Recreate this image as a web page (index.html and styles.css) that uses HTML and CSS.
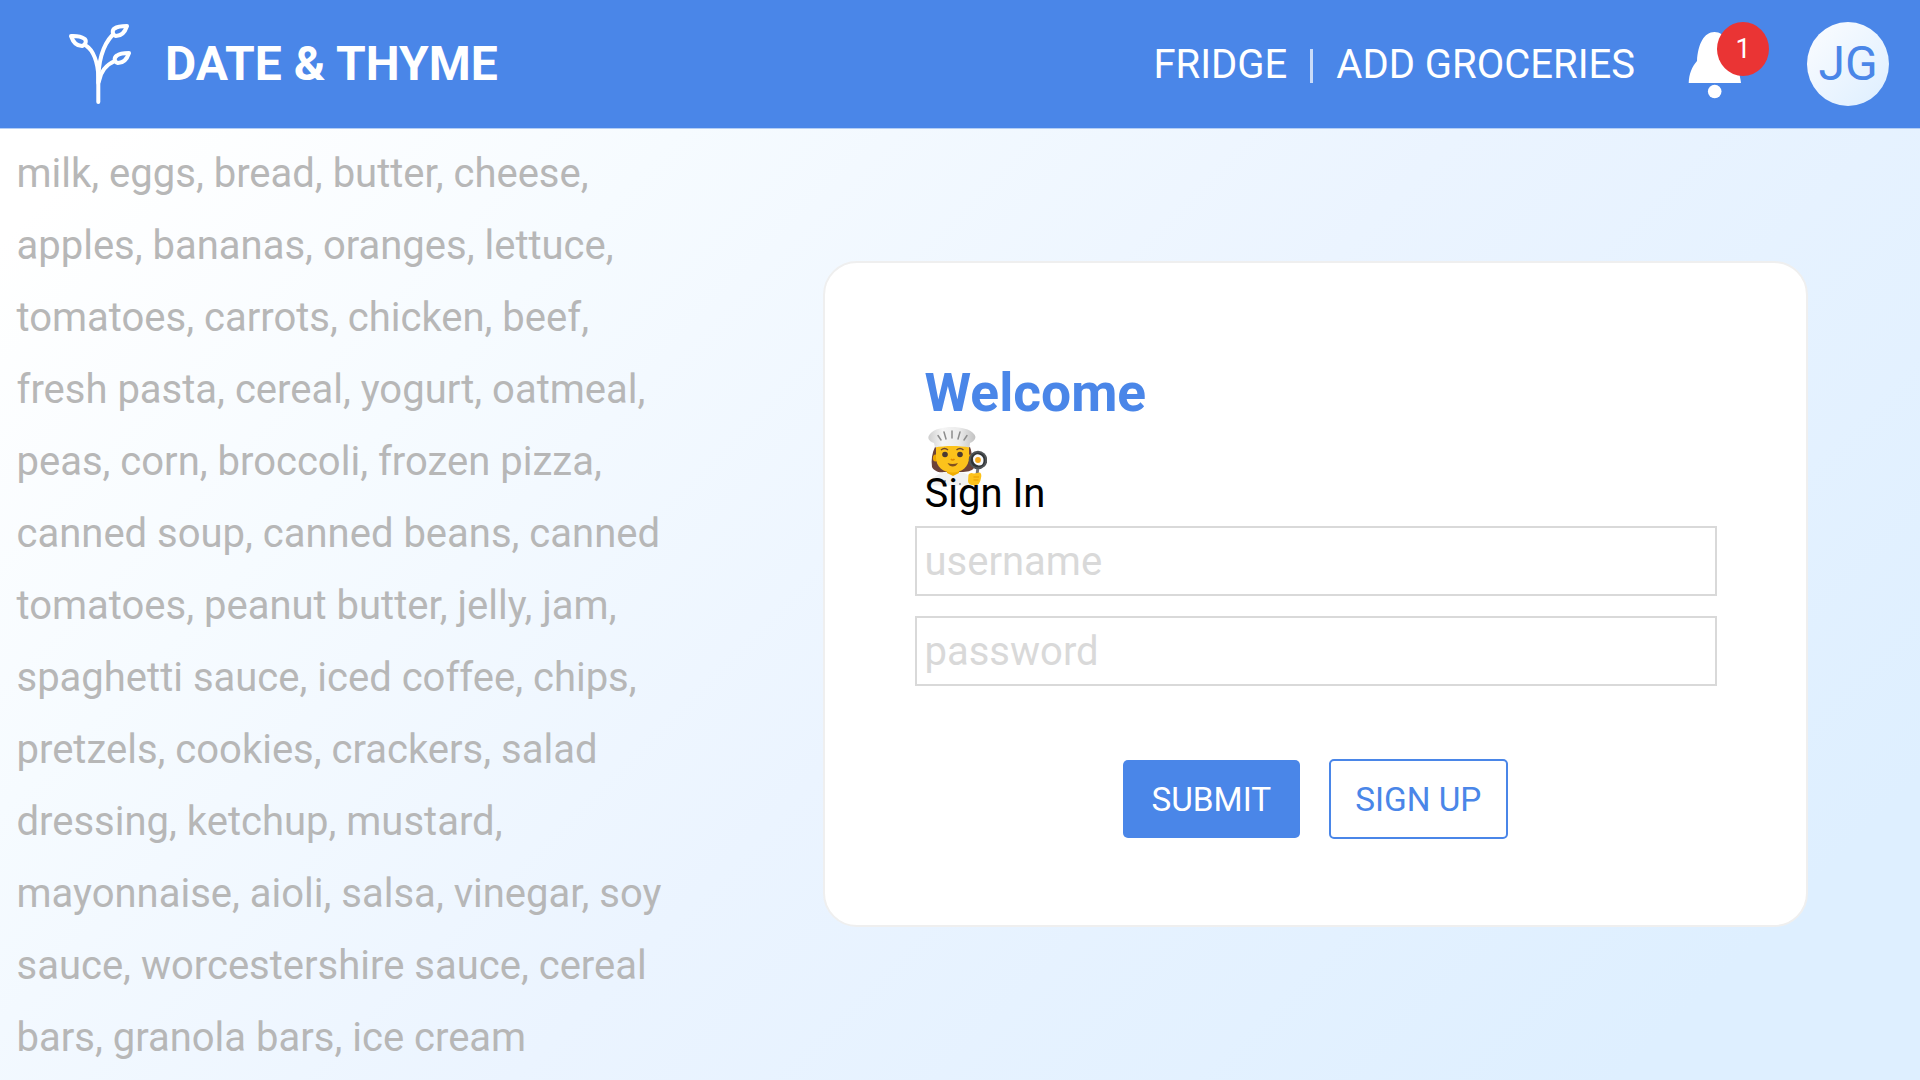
FILE: index.html
```html
<!DOCTYPE html>
<html lang="en">
<head>
<meta charset="utf-8">
<title>Date &amp; Thyme</title>
<link rel="stylesheet" href="styles.css">
</head>
<body>
<header class="topbar">
  <svg class="logo" viewBox="0 0 80 100" width="80" height="100" fill="none" stroke="#fff" stroke-width="4" stroke-linecap="round" stroke-linejoin="round">
    <path d="M38.300 87V62C38 47 33 35 26.500 31"/>
    <path d="M38.300 68C38 44 43 30 52.500 20"/>
    <path d="M39 66C41 56 46.500 49.500 55 46"/>
    <path d="M11 21C13 27 17 31 22 31C26 30 27 25 24 23.500C20 20.500 15 21 11 21Z"/>
    <path d="M67 11C65 17 61 21 56 21C52 20 52 15 54.500 13.500C58 11 63 11 67 11Z"/>
    <path d="M69 38C67 44 63 48 58 48C54 47 53.500 43 57 40.500C60 38 65 38 69 38Z"/>
  </svg>
  <h1 class="brand">DATE &amp; THYME</h1>
  <nav class="nav">
    <a class="nav-link">FRIDGE</a>
    <span class="divider"></span>
    <a class="nav-link">ADD GROCERIES</a>
  </nav>
  <div class="alerts">
    <svg class="bell" viewBox="0 0 54 68" width="54" height="68" fill="#fff">
      <path d="M.7 51C1 42 4 34.500 9 29C10 12 16 0 26.500 0S43 12 44 29C49 34.500 52 42 53 51Z"/>
      <ellipse cx="26.700" cy="59.500" rx="6.800" ry="6.700"/>
    </svg>
    <span class="badge">1</span>
  </div>
  <div class="avatar">JG</div>
</header>
<main class="page">
  <p class="groceries">milk, eggs, bread, butter, cheese,<br>apples, bananas, oranges, lettuce,<br>tomatoes, carrots, chicken, beef,<br>fresh pasta, cereal, yogurt, oatmeal,<br>peas, corn, broccoli, frozen pizza,<br>canned soup, canned beans, canned<br>tomatoes, peanut butter, jelly, jam,<br>spaghetti sauce, iced coffee, chips,<br>pretzels, cookies, crackers, salad<br>dressing, ketchup, mustard,<br>mayonnaise, aioli, salsa, vinegar, soy<br>sauce, worcestershire sauce, cereal<br>bars, granola bars, ice cream</p>
  <form class="card">
    <h2 class="welcome">Welcome</h2>
    <svg class="cook" viewBox="0 0 60 60" width="60" height="60">
      <defs>
        <linearGradient id="hat" x1="0" x2="1"><stop offset="0" stop-color="#cfcfcf"/><stop offset=".3" stop-color="#f5f5f5"/><stop offset=".65" stop-color="#ececec"/><stop offset="1" stop-color="#c2c2c2"/></linearGradient>
      </defs>
      <path d="M8 20C5 26 4 33 5 40C7 44 12 46 17 45H34C40 45 45 44 47 41C44 36 46 27 43 20Z" fill="#6d4339"/>
      <path d="M2 58.500C4 50 11 46.500 19 45H33C41 46.500 47 50 49 58.500Z" fill="#f1f1f1"/>
      <path d="M20 42H32V46L26 49L20 46Z" fill="#f0ad00"/>
      <ellipse cx="8.500" cy="31" rx="2.600" ry="3.500" fill="#eda600"/>
      <ellipse cx="43" cy="31" rx="2.600" ry="3.500" fill="#eda600"/>
      <path d="M9 19H42V30C42 40 35 45.500 25.500 45.500S9 40 9 30Z" fill="#fcc21b"/>
      <path d="M8 20.500L7 16C1 14 0 10 3 7C7 2 16 0 25 0S43 2 47 7C50 10 48 14 43 16L42.500 20.500C33 18.500 17 18.500 8 20.500Z" fill="url(#hat)"/>
      <path d="M14 13L11 8.500M19 12L17 5M25 11V4M31 12L33 5M37 13L40 8.500" stroke="#8c8c8c" stroke-width="1.500" stroke-linecap="round" fill="none"/>
      <path d="M14 23Q17.500 20 21 23M29.500 23Q33 20 36.500 23" stroke="#70492d" stroke-width="1.400" fill="none"/>
      <circle cx="18" cy="27.500" r="2.800" fill="#4a3a32"/><circle cx="33" cy="27.500" r="2.800" fill="#4a3a32"/>
      <path d="M24 32Q25.500 34 27.500 32" stroke="#e08a00" stroke-width="1.700" fill="none"/>
      <path d="M20.500 36Q25.500 38 31 36Q29 39.500 25.700 39.500Q22.500 39.500 20.500 36Z" fill="#805020"/>
      <path d="M51 40L50 48" stroke="#777" stroke-width="3"/>
      <circle cx="51" cy="33" r="9.300" fill="#505457"/><circle cx="51" cy="33" r="7.300" fill="#2f3336"/>
      <path d="M46 31Q48 26.500 52 27.500Q57 29 56.500 34Q56 39 51.500 38.500Q45.500 37 46 31Z" fill="#fafafa"/>
      <circle cx="51" cy="33" r="2.900" fill="#f4a91c"/>
      <path d="M41.500 47.500Q43 45 47 46.500L53 45.500Q55 47 54 51Q53 58.500 47.500 58.500Q41 58 41 54Z" fill="#fcc21b"/>
      <path d="M46.500 50H52M46.500 53H51.500" stroke="#e69b00" stroke-width="1"/>
      <circle cx="18" cy="54" r="1" fill="#888"/><circle cx="33" cy="57" r="1" fill="#888"/>
    </svg>
    <h3 class="signin">Sign In</h3>
    <input class="field" type="text" placeholder="username">
    <input class="field" type="text" placeholder="password">
    <div class="actions">
      <button class="btn btn-primary" type="button">SUBMIT</button>
      <button class="btn btn-outline" type="button">SIGN UP</button>
    </div>
  </form>
</main>
</body>
</html>
```

FILE: styles.css
```css
* { box-sizing: border-box; }
body {
  margin: 0;
  width: 1920px;
  height: 1080px;
  overflow: hidden;
  font-family: Roboto, sans-serif;
  background: linear-gradient(135deg, #ffffff 8%, #f6fbff 27%, #ebf4ff 53%, #deefff 90%);
}
.topbar {
  display: flex;
  align-items: flex-start;
  height: 128px;
  padding-left: 60px;
  background: #4a86e8;
  box-shadow: 0 1px 0 #b3cef6;
  color: #fff;
}
.logo { margin-top: 15px; }
.brand {
  margin: 0 0 0 25px;
  font-size: 48px;
  font-weight: 700;
  line-height: 128px;
}
.nav {
  display: flex;
  align-items: center;
  height: 128px;
  margin-left: auto;
}
.nav-link { font-size: 40px; }
.divider {
  width: 3px;
  height: 34px;
  margin: 4px 23px 0 23px;
  background: #c9dbf8;
}
.alerts {
  position: relative;
  margin: 32px 66px 0 53px;
  width: 54px;
}
.bell { display: block; }
.badge {
  position: absolute;
  left: 29px;
  top: -10px;
  width: 52px;
  height: 54px;
  border-radius: 50%;
  background: #ea3434;
  font-size: 27px;
  line-height: 54px;
  text-align: center;
}
.avatar {
  width: 82px;
  height: 84px;
  margin: 22px 31px 0 -1px;
  border-radius: 50%;
  background: linear-gradient(135deg, #fcfdff, #ddeeff);
  color: #4a86e8;
  font-size: 48px;
  line-height: 84px;
  text-align: center;
}
.page {
  display: flex;
  align-items: flex-start;
  height: 952px;
}
.groceries {
  width: 807px;
  margin: 10px 0 0;
  padding-left: 16.5px;
  color: #b7b7b7;
  font-size: 40px;
  line-height: 72px;
  white-space: nowrap;
}
.card {
  display: flex;
  flex-direction: column;
  width: 985px;
  height: 666px;
  margin: 133px 0 0 16px;
  padding: 95px 90px 0 89.5px;
  border: 2px solid #efefef;
  border-radius: 34px;
  background: #fff;
}
.welcome {
  margin: 0 0 0 10px;
  color: #4a86e8;
  font-size: 53.33px;
  font-weight: 700;
  line-height: 70px;
}
.cook { margin: -1px 0 0 12px; }
.signin {
  position: relative;
  margin: -18px 0 7px 10px;
  color: #000;
  font-size: 40px;
  font-weight: 400;
  line-height: 50px;
}
.field {
  width: 802px;
  height: 70px;
  margin: 0 0 20px;
  padding: 0 8px;
  border: 2px solid #d9d9d9;
  background: #fff;
  color: #333;
  font: 40px Roboto, sans-serif;
}
.field::placeholder { color: #d9d9d9; opacity: 1; }
.actions {
  display: flex;
  justify-content: center;
  align-items: center;
  gap: 29px;
  margin-top: 53px;
}
.btn {
  padding: 0;
  border-radius: 5px;
  font: 33.33px Roboto, sans-serif;
}
.btn-primary {
  width: 177px;
  height: 78px;
  border: 0;
  background: #4a86e8;
  color: #fff;
}
.btn-outline {
  width: 179px;
  height: 80px;
  border: 2px solid #4a86e8;
  background: #fff;
  color: #4a86e8;
}
```
